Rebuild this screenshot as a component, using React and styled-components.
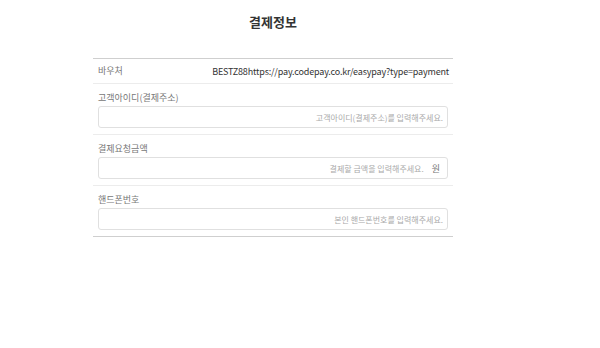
import React from 'react'
import styled, { createGlobalStyle } from 'styled-components'

const GlobalStyle = createGlobalStyle`
  body {
    margin: 0;
    background: #fff;
    font-family: "Noto Sans CJK KR", "Noto Sans", sans-serif;
  }
`

const fields = [
  { label: '고객아이디(결제주소)', placeholder: '고객아이디(결제주소)를 입력해주세요.' },
  { label: '결제요청금액', placeholder: '결제할 금액을 입력해주세요.', unit: '원' },
  { label: '핸드폰번호', placeholder: '본인 핸드폰번호를 입력해주세요.' },
]

function App() {
  return (
    <Page>
      <GlobalStyle />
      <Title>결제정보</Title>
      <Table>
        <InfoRow>
          <Label>바우처</Label>
          <Value>BESTZ88https://pay.codepay.co.kr/easypay?type=payment</Value>
        </InfoRow>
        {fields.map((f) => (
          <FieldRow key={f.label}>
            <Label>{f.label}</Label>
            <InputBox>
              <Input placeholder={f.placeholder} />
              {f.unit && <Unit>{f.unit}</Unit>}
            </InputBox>
          </FieldRow>
        ))}
      </Table>
    </Page>
  )
}

export default App

const Page = styled.div`
  width: 360px;
  padding-left: 93px;
  padding-top: 12px;
`

const Title = styled.h2`
  margin: 0;
  text-align: center;
  font-size: 13px;
  font-weight: 700;
  color: #333;
  line-height: 20px;
  height: 46px;
`

const Table = styled.div`
  border-top: 1px solid #cfcfcf;
  border-bottom: 1px solid #cfcfcf;
`

const InfoRow = styled.div`
  display: flex;
  align-items: center;
  justify-content: space-between;
  height: 24px;
  padding: 0 4px 0 5px;
  border-bottom: 1px solid #ececec;
`

const Label = styled.span`
  font-size: 9px;
  color: #777;
  line-height: 14px;
`

const Value = styled.span`
  font-size: 9px;
  color: #333;
  letter-spacing: -0.17px;
`

const FieldRow = styled.div`
  display: flex;
  flex-direction: column;
  gap: 1px;
  padding: 7px 5px 6px;
  border-bottom: 1px solid #ececec;

  &:last-child {
    border-bottom: none;
  }
`

const InputBox = styled.div`
  display: flex;
  align-items: center;
  height: 20px;
  border: 1px solid #e0e0e0;
  border-radius: 3px;
  padding: 0 4px;
`

const Input = styled.input`
  flex: 1;
  min-width: 0;
  border: none;
  outline: none;
  background: transparent;
  text-align: right;
  font-family: inherit;
  font-size: 8px;
  padding: 0;

  &::placeholder {
    color: #aaa;
  }
`

const Unit = styled.span`
  font-size: 9px;
  color: #777;
  margin-left: 8px;
  margin-right: 3px;
`
